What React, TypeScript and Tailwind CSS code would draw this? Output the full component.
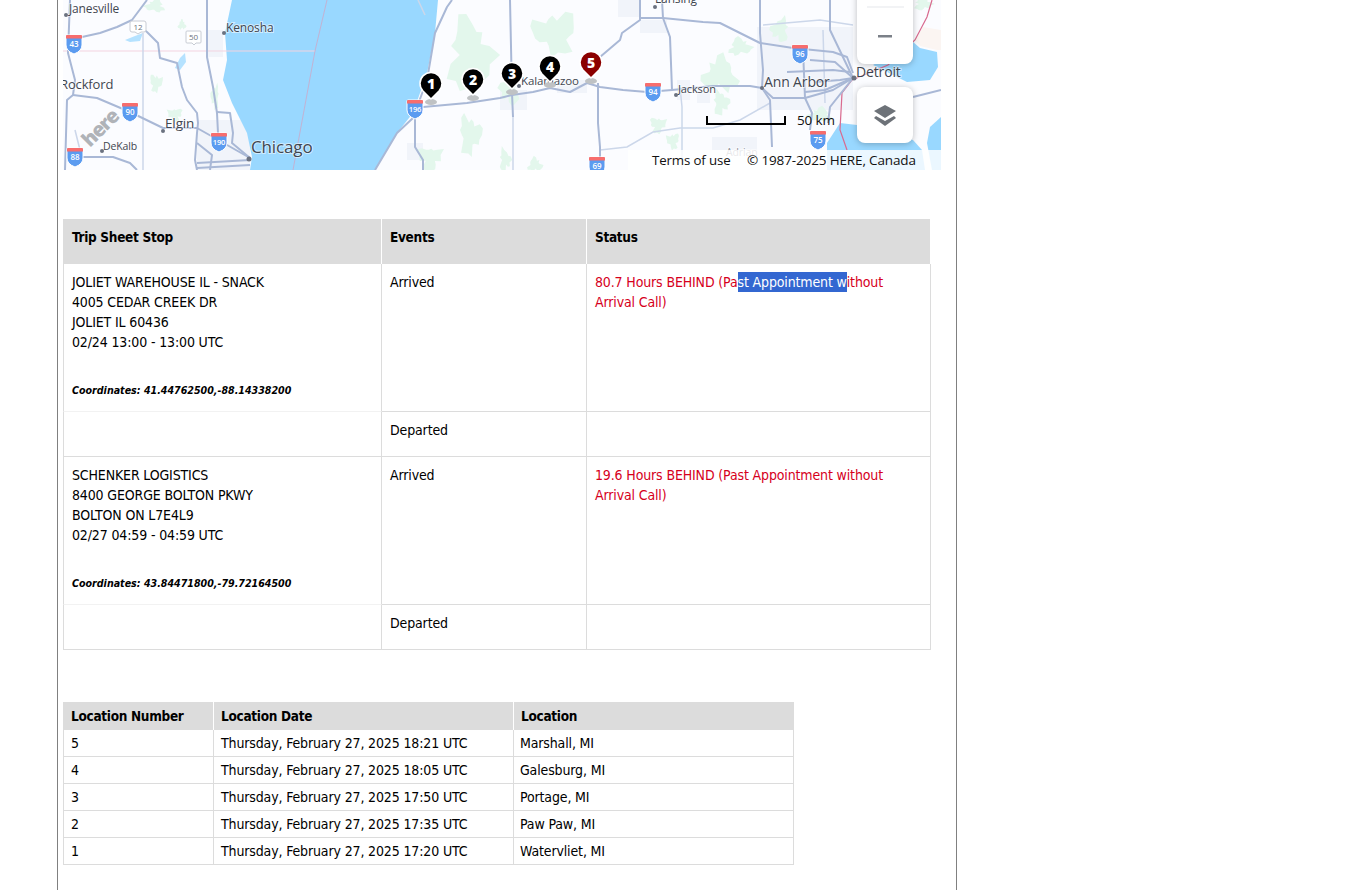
import React from 'react';

const FONT = { fontFamily: '"DejaVu Sans Condensed", "DejaVu Sans", sans-serif' };

const roads = [
  // wisconsin / illinois
  '70,0 68,53 75,80 73,95 67,100 65,170',
  '82,37 100,33 117,27 132,20 147,0',
  '138,25 147,32 158,43 160,58 177,63 182,87 187,100 197,113 198,123 197,133 195,160 197,170',
  '73,95 97,98 130,112 163,128 197,128 213,137 250,158',
  '82,157 113,157 130,163 137,170',
  '207,0 207,57 213,87 217,113 218,133',
  '217,112 230,113 233,133 232,143 250,158',
  '197,143 212,155 210,170',
  '197,163 250,160',
  '197,168 250,165',
  // michigan
  '375,170 397,133 413,118 427,80 435,33 447,7 452,0',
  '423,107 467,103 500,98 512,95 533,92 550,88 570,92 587,83 600,87 623,90 647,92 672,90 713,86 750,86 762,88 773,98 805,98 833,90 853,78',
  '415,117 415,147 423,160 423,170',
  '510,0 512,93 513,117',
  '598,83 598,123 600,147 600,163',
  '600,57 620,40 622,33 640,20 640,0',
  '640,18 663,18 703,22 720,23 760,43 793,48 833,52 847,57 853,73',
  '662,0 663,18 670,37 672,90',
  '760,0 760,33 763,70 762,88 770,100 772,147',
  '787,72 833,70 850,72',
  '803,50 805,98 812,113 810,130',
  '830,0 830,30 853,78',
  '853,78 830,107 828,123',
  '853,78 825,90 805,92',
  '853,78 835,62 810,60',
  '853,78 840,80 815,82',
  '913,97 941,90',
];

const thinRoads = [
  '600,150 627,147 653,132 680,128 713,128 740,120 770,103',
  '680,87 682,107 682,170',
  '513,117 513,170',
  '143,33 143,170',
  '763,25 820,20 853,25',
  '823,30 825,103',
  '75,130 80,150',
  '418,0 425,15',
];

// jagged outline for forest patches, same result on every render
function blob(x: number, y: number, rx: number, ry: number, seed: number) {
  const pts: string[] = [];
  for (let i = 0; i < 22; i++) {
    const a = (i / 22) * Math.PI * 2;
    const k = 0.72 + 0.2 * Math.sin(a * 3 + seed) + 0.14 * Math.sin(a * 7 + seed * 2) + 0.07 * Math.sin(a * 13 + seed);
    pts.push(`${(x + Math.cos(a) * rx * k).toFixed(1)},${(y + Math.sin(a) * ry * k).toFixed(1)}`);
  }
  return pts.join(' ');
}

const greens = [
  blob(470, 55, 28, 45, 1),
  blob(470, 135, 14, 24, 2),
  blob(430, 158, 15, 15, 3),
  blob(555, 33, 28, 26, 4),
  blob(510, 88, 12, 22, 5),
  blob(720, 75, 22, 22, 6),
  blob(740, 47, 14, 11, 7),
  blob(721, 103, 10, 15, 8),
  blob(658, 125, 10, 10, 9),
  blob(673, 141, 8, 10, 10),
  blob(780, 30, 11, 15, 11),
  blob(820, 115, 14, 9, 12),
  blob(535, 165, 9, 9, 13),
  blob(505, 160, 7, 14, 14),
  blob(156, 83, 8, 11, 15),
  blob(175, 115, 9, 9, 16),
  blob(215, 97, 5, 15, 17),
  blob(155, 6, 12, 8, 18),
  blob(182, 25, 5, 6, 19),
  blob(923, 4, 11, 8, 20),
];

const urban = [
  '207,30 223,30 223,57 207,57',
  '618,0 640,0 640,17 618,17',
  '640,20 667,20 667,33 640,33',
  '677,80 690,80 690,100 677,100',
  '697,90 710,90 710,103 697,103',
  '757,27 853,27 853,110 757,110',
  '712,137 757,137 757,150 712,150',
  '557,80 587,80 587,93 557,93',
  '500,90 527,90 527,110 500,110',
  '197,120 250,120 250,170 197,170',
  '407,143 423,143 423,160 407,160',
];

const shields = [
  { x: 74, y: 43, n: '43' },
  { x: 130, y: 111, n: '90' },
  { x: 75, y: 156, n: '88' },
  { x: 219, y: 141, n: '190' },
  { x: 415, y: 108, n: '196' },
  { x: 653, y: 91, n: '94' },
  { x: 800, y: 53, n: '96' },
  { x: 818, y: 139, n: '75' },
  { x: 597, y: 165, n: '69' },
];

const pins = [
  { x: 431, y: 84, n: 1, c: '#000000' },
  { x: 473, y: 80, n: 2, c: '#000000' },
  { x: 512, y: 74, n: 3, c: '#000000' },
  { x: 550, y: 67, n: 4, c: '#000000' },
  { x: 591, y: 63, n: 5, c: '#8b0000' },
];

const labels = [
  { x: 69, y: 13, t: 'Janesville', s: 12 },
  { x: 226, y: 32, t: 'Kenosha', s: 12 },
  { x: 60, y: 89, t: 'Rockford', s: 13 },
  { x: 165, y: 128, t: 'Elgin', s: 13.5 },
  { x: 103, y: 150, t: 'DeKalb', s: 10.5 },
  { x: 251, y: 153, t: 'Chicago', s: 17 },
  { x: 678, y: 93, t: 'Jackson', s: 11 },
  { x: 521, y: 85, t: 'Kalamazoo', s: 11.500 },
  { x: 764, y: 87, t: 'Ann Arbor', s: 14 },
  { x: 856, y: 77, t: 'Detroit', s: 14 },
  { x: 655, y: 3, t: 'Lansing', s: 12 },
  { x: 726, y: 156, t: 'Adrian', s: 10.5 },
];

const dots = [
  [66, 15, 2], [224, 33, 2], [163, 131, 2], [102, 151, 2], [249, 159, 2.5],
  [676, 95, 2], [762, 88, 2], [854, 78, 2.5], [519, 86, 2], [655, 7, 2],
];

function MapView() {
  return (
    <svg viewBox="63 0 878 170" className="block w-[878px] h-[170px]" style={{ fontFamily: '"Open Sans", sans-serif' }}>
      <rect x="63" y="0" width="878" height="170" fill="#fbfcff" />
      {urban.map((p, i) => <polygon key={i} points={p} fill="#f1f4fa" />)}
      {greens.map((p, i) => <polygon key={i} points={p} fill="#e3f7ec" />)}

      {/* lake michigan */}
      <path d="M232,0 L225,33 L227,60 L223,80 L232,103 L247,133 L252,157 L250,170 L375,170 L397,133 L413,113 L427,73 L435,33 L438,0 Z" fill="#99d8ff" />
      {/* inland lakes */}
      <path d="M125,40 L135,36 L143,33 L140,41 L130,42 Z" fill="#b5e2ff" />
      <path d="M175,68 L180,58 L185,53 L186,62 L180,70 Z" fill="#b5e2ff" />
      {/* st clair and erie */}
      <path d="M873,65 L913,42 L920,48 L937,52 L938,67 L930,80 L907,82 Z" fill="#99d8ff" />
      <path d="M827,143 L840,123 L857,125 L913,140 L922,150 L925,170 L827,170 Z" fill="#99d8ff" />
      <path d="M941,117 L930,127 L927,143 L932,170 L941,170 Z" fill="#99d8ff" />
      <path d="M915,40 L923,27 L941,30 L941,50 L937,50 L920,46 Z" fill="#fbf5f2" />

      {/* state and country borders */}
      <polyline points="63,51 315,51" fill="none" stroke="#f3d3e0" strokeWidth="1" />
      <polyline points="327,0 315,51 293,170" fill="none" stroke="#d3a3c0" strokeWidth="1" opacity="0.7" />
      <polyline points="932,0 927,17 915,40 888,65 852,80 842,93 840,130 847,150" fill="none" stroke="#d96a8f" strokeWidth="1.2" />

      {thinRoads.map((p, i) => <polyline key={i} points={p} fill="none" stroke="#ccd7ea" strokeWidth="1.5" />)}
      {roads.map((p, i) => <polyline key={i} points={p} fill="none" stroke="#a9b8d6" strokeWidth="2" strokeLinejoin="round" />)}

      {labels.map(l => (
        <text
          key={l.t}
          x={l.x}
          y={l.y}
          fontSize={l.s}
          fill={l.t === 'Adrian' ? '#8c9098' : '#3f4650'}
          stroke="#ffffff"
          strokeOpacity="0.55"
          strokeWidth="2"
          paintOrder="stroke"
        >
          {l.t}
        </text>
      ))}
      {dots.map(d => <circle key={d[0]} cx={d[0]} cy={d[1]} r={d[2]} fill="#6b7280" />)}

      {/* US highway badges */}
      <path d="M132,21 h12 q2,0 2,2 v7 q0,2 -2,2 h-3 l-3,2 -3,-2 h-3 q-2,0 -2,-2 v-7 q0,-2 2,-2 z" fill="#ffffff" stroke="#c8ccd4" />
      <text x="138" y="30" fontSize="8" fill="#6b7280" textAnchor="middle">12</text>
      <path d="M187,31 h13 q1,0 1,1 v10 q0,1 -1,1 h-4 l-2,2 -2,-2 h-5 q-1,0 -1,-1 v-10 q0,-1 1,-1 z" fill="#ffffff" stroke="#c8ccd4" />
      <text x="193.500" y="40" fontSize="8" fill="#6b7280" textAnchor="middle">50</text>

      {shields.map(s => (
        <g key={s.n}>
          <path
            d={`M${s.x - 7},${s.y - 8} h14 q1,0 1,1 v9 q0,6 -8,9 q-8,-3 -8,-9 v-9 q0,-1 1,-1 z`}
            fill="#5b9bf0"
            stroke="#ffffff"
            strokeWidth="1"
          />
          <path d={`M${s.x - 7},${s.y - 8} h14 q1,0 1,1 v2.500 h-16 v-2.500 q0,-1 1,-1 z`} fill="#f76d6d" />
          <text x={s.x} y={s.y + 4} fontSize={s.n.length > 2 ? 7.5 : 8} fontWeight="600" fill="#ffffff" textAnchor="middle">{s.n}</text>
        </g>
      ))}

      {/* here watermark */}
      <text x="90" y="148" fontSize="20" fontWeight="800" fill="#b0b3b8" transform="rotate(-45 90 148)" style={{ letterSpacing: '-1.200px' }}>here</text>

      {/* markers */}
      {pins.map(p => (
        <g key={p.n}>
          <ellipse cx={p.x} cy={p.y + 18} rx="6" ry="3" fill="#bfc2c4" />
          <path
            d={`M${p.x},${p.y + 15} L${p.x - 8},${p.y + 7} A11,11 0 1 1 ${p.x + 8},${p.y + 7} Z`}
            fill={p.c}
            stroke="#ffffff"
            strokeWidth="1.5"
          />
          <text x={p.x} y={p.y + 5} fontSize="14" fontWeight="800" fill="#ffffff" textAnchor="middle">{p.n}</text>
        </g>
      ))}

      {/* scale */}
      <polyline points="707,116 707,124 785,124 785,116" fill="none" stroke="#000000" strokeWidth="2" />
      <text x="797" y="125" fontSize="13.5" fill="#111111">50 km</text>

      {/* copyright strip */}
      <rect x="628" y="150" width="313" height="20" fill="#ffffff" opacity="0.8" />
      <text x="652" y="165" fontSize="13.3" fill="#111111">Terms of use</text>
      <text x="747" y="165" fontSize="13.5" fill="#111111">© 1987-2025 HERE, Canada</text>

      {/* map buttons */}
      <g style={{ filter: 'drop-shadow(0 1px 3px rgba(0,0,0,0.25))' }}>
        <rect x="857" y="-30" width="56" height="94" rx="8" fill="#ffffff" />
        <rect x="857" y="87" width="56" height="56" rx="8" fill="#ffffff" />
      </g>
      <line x1="867" y1="7" x2="904" y2="7" stroke="#e5e7eb" />
      <rect x="878" y="35" width="14" height="2.500" fill="#7b8088" />
      <path d="M885,105 L896,111 L885,118 L874,111 Z" fill="#6d7278" />
      <path d="M876,116 L885,121 L894,116 L896,118 L885,126 L874,118 Z" fill="#6d7278" />
    </svg>
  );
}

const cell = 'align-top px-2 pt-2 border-r border-b border-[#dcdcdc]';
const head = 'align-top text-left font-bold text-[13.5px] tracking-[-0.3px] px-2 pt-2 bg-[#dcdcdc] border-r border-white';
const smallHead = 'text-left font-bold text-[13.5px] tracking-[-0.3px] bg-[#dcdcdc]';

function Stop({ lines, coords, status }: { lines: string[]; coords: string; status: React.ReactNode }) {
  return (
    <>
      <tr>
        <td className={`${cell} border-l border-b-[#f2f2f2] h-[148px]`}>
          {lines.map(l => <div key={l}>{l}</div>)}
          <div className="mt-[28px] text-[10.6px] font-bold italic tracking-normal">Coordinates: {coords}</div>
        </td>
        <td className={cell}>Arrived</td>
        <td className={`${cell} text-[#d6001c]`}>{status}</td>
      </tr>
      <tr>
        <td className={`${cell} border-l h-[45px]`}></td>
        <td className={cell}>Departed</td>
        <td className={cell}></td>
      </tr>
    </>
  );
}

const locations = [
  ['5', 'Thursday, February 27, 2025 18:21 UTC', 'Marshall, MI'],
  ['4', 'Thursday, February 27, 2025 18:05 UTC', 'Galesburg, MI'],
  ['3', 'Thursday, February 27, 2025 17:50 UTC', 'Portage, MI'],
  ['2', 'Thursday, February 27, 2025 17:35 UTC', 'Paw Paw, MI'],
  ['1', 'Thursday, February 27, 2025 17:20 UTC', 'Watervliet, MI'],
];

export default function App() {
  return (
    <div className="bg-white h-[890px] overflow-hidden text-black text-sm leading-5 tracking-[-0.14px]" style={FONT}>
      <div className="ml-[57px] w-[900px] h-full border-x border-[#808080] px-[5px]">
        <MapView />

        <table className="mt-[49px] w-[868px] table-fixed border-separate border-spacing-0">
          <colgroup>
            <col className="w-[319px]" />
            <col className="w-[205px]" />
            <col />
          </colgroup>
          <thead>
            <tr className="h-[45px]">
              <th className={`${head} pl-[9px]`}>Trip Sheet Stop</th>
              <th className={head}>Events</th>
              <th className={head}>Status</th>
            </tr>
          </thead>
          <tbody>
            <Stop
              lines={['JOLIET WAREHOUSE IL - SNACK', '4005 CEDAR CREEK DR', 'JOLIET IL 60436', '02/24 13:00 - 13:00 UTC']}
              coords="41.44762500,-88.14338200"
              status={
                <>
                  80.7 Hours BEHIND (Pa
                  <span className="inline-block whitespace-pre bg-[#3367d1] text-white">st Appointment w</span>
                  ithout Arrival Call)
                </>
              }
            />
            <Stop
              lines={['SCHENKER LOGISTICS', '8400 GEORGE BOLTON PKWY', 'BOLTON ON L7E4L9', '02/27 04:59 - 04:59 UTC']}
              coords="43.84471800,-79.72164500"
              status="19.6 Hours BEHIND (Past Appointment without Arrival Call)"
            />
          </tbody>
        </table>

        <table className="mt-[52px] w-[731px] table-fixed border-separate border-spacing-0">
          <colgroup>
            <col className="w-[151px]" />
            <col className="w-[300px]" />
            <col />
          </colgroup>
          <thead>
            <tr className="h-[28px]">
              <th className={`${smallHead} pl-[8px] pr-[6px] border-r border-white`}>Location Number</th>
              <th className={`${smallHead} px-[7px] border-r border-white`}>Location Date</th>
              <th className={`${smallHead} px-[7px]`}>Location</th>
            </tr>
          </thead>
          <tbody>
            {locations.map(row => (
              <tr key={row[0]} className="h-[27px]">
                <td className="px-[7px] border-l border-r border-b border-[#dcdcdc]">{row[0]}</td>
                <td className="px-[7px] border-r border-b border-[#dcdcdc]">{row[1]}</td>
                <td className="px-[6px] border-r border-b border-[#dcdcdc]">{row[2]}</td>
              </tr>
            ))}
          </tbody>
        </table>
      </div>
    </div>
  );
}
